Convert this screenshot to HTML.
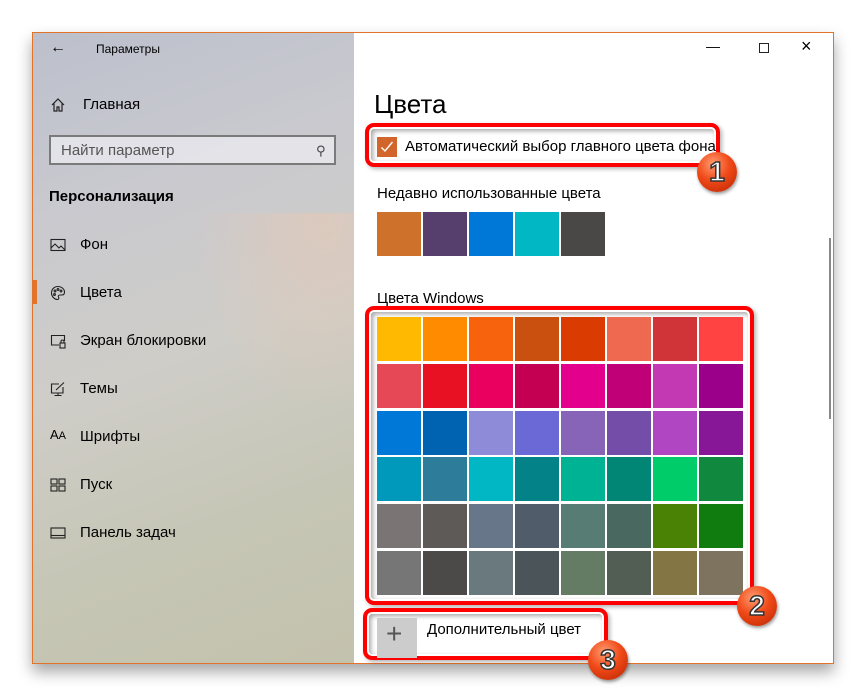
<!DOCTYPE html>
<html><head><meta charset="utf-8"><style>
*{margin:0;padding:0;box-sizing:border-box}
body{width:866px;height:697px;background:#fff;position:relative;overflow:hidden;font-family:"Liberation Sans","DejaVu Sans",sans-serif;color:#000}
.win{position:absolute;left:32px;top:32px;width:802px;height:632px;border:1px solid #e2732a;background:#fff;box-shadow:0 8px 14px rgba(0,0,0,.35)}
.left{position:absolute;left:0;top:0;width:321px;height:630px;background:linear-gradient(160deg,#bcc0cc 0%,#c9c9cf 25%,#cfcdc8 50%,#c6c6b6 75%,#c3c2ad 100%)}
.left:after{content:"";position:absolute;right:0;top:180px;width:160px;height:200px;background:radial-gradient(ellipse at 80% 0%,rgba(230,200,180,.6),rgba(230,200,180,0) 70%)}
.t{position:absolute;white-space:nowrap}
.sw{position:absolute;width:44px;height:44px}
.red{position:absolute;border:4px solid #f00;border-radius:9px;box-shadow:inset 0 0 0 2px #fff,inset 2px 2px 5px 2px rgba(0,0,0,.35),2px 2px 4px rgba(0,0,0,.3)}
.num{position:absolute;width:40px;height:40px;border-radius:50%;background:radial-gradient(circle at 40% 30%,#ff9a70 0%,#f04a18 45%,#b82200 100%);box-shadow:1px 2px 3px rgba(0,0,0,.4);color:#fff;font:bold 28px/40px "Liberation Sans",sans-serif;text-align:center;-webkit-text-stroke:1.5px #333}
.ic{position:absolute;left:17px;width:16px;height:16px}
</style></head><body>
<div class="win">
<div class="left">
  <div class="t" style="left:17px;top:6px;font-size:16px">&#8592;</div>
  <div class="t" style="left:63px;top:9px;font-size:12px">Параметры</div>
  <svg class="ic" style="top:64px" viewBox="0 0 16 16" fill="none" stroke="#222" stroke-width="1.2"><path d="M2 8L8 2l6 6M4 6.5V14h3v-4h2v4h3V6.5"/></svg>
  <div class="t" style="left:50px;top:63px;font-size:15px">Главная</div>
  <div style="position:absolute;left:16px;top:102px;width:287px;height:30px;border:2px solid #7a7a7a;background:rgba(235,235,240,.75)"></div>
  <div class="t" style="left:28px;top:109px;font-size:15px;color:#555">Найти параметр</div>
  <div class="t" style="left:283px;top:110px;font-size:13px;color:#444">&#9906;</div>
  <div class="t" style="left:16px;top:155px;font-size:15px;font-weight:bold">Персонализация</div>
  <svg class="ic" style="top:204px" viewBox="0 0 16 16" fill="none" stroke="#222" stroke-width="1.1"><rect x="1" y="2.5" width="14" height="11"/><path d="M1 11l4-4 4 4 2-2 4 4"/></svg>
  <div class="t" style="left:47px;top:203px;font-size:15px">Фон</div>
  <div style="position:absolute;left:0;top:247px;width:4px;height:24px;background:#e2732a"></div>
  <svg class="ic" style="top:252px" viewBox="0 0 16 16" fill="none" stroke="#222" stroke-width="1.1"><path d="M8 1.5C4 1.5 1.5 4.5 1.5 8c0 3.5 3 6.5 6 6.5 1.5 0 1.5-1.5 1-2.5-.5-1 0-2 1.5-2h2c2 0 2.5-1.5 2.5-3C14.5 4 11.5 1.5 8 1.5z"/><circle cx="5" cy="6" r=".9"/><circle cx="8" cy="4.5" r=".9"/><circle cx="11" cy="6" r=".9"/><circle cx="4.5" cy="9.5" r=".9"/></svg>
  <div class="t" style="left:47px;top:251px;font-size:15px">Цвета</div>
  <svg class="ic" style="top:300px" viewBox="0 0 16 16" fill="none" stroke="#222" stroke-width="1.1"><path d="M9 12H1.5V2.5h13V8"/><rect x="10" y="10" width="5" height="5"/><path d="M11 10V8.5a1.5 1.5 0 013 0V10"/></svg>
  <div class="t" style="left:47px;top:299px;font-size:15px">Экран блокировки</div>
  <svg class="ic" style="top:348px" viewBox="0 0 16 16" fill="none" stroke="#222" stroke-width="1.1"><path d="M13 6v6H1.5V3H9M8 12v2.5M4.5 14.5h7M6 9l8-7.5"/></svg>
  <div class="t" style="left:47px;top:347px;font-size:15px">Темы</div>
  <div class="t" style="left:17px;top:394px;font-size:13px">A<span style="font-size:11px">A</span></div>
  <div class="t" style="left:47px;top:395px;font-size:15px">Шрифты</div>
  <svg class="ic" style="top:444px" viewBox="0 0 16 16" fill="none" stroke="#222" stroke-width="1.1"><rect x="1" y="2" width="6" height="5"/><rect x="9" y="2" width="6" height="5"/><rect x="1" y="9" width="6" height="5"/><rect x="9" y="9" width="6" height="5"/></svg>
  <div class="t" style="left:47px;top:443px;font-size:15px">Пуск</div>
  <svg class="ic" style="top:492px" viewBox="0 0 16 16" fill="none" stroke="#222" stroke-width="1.1"><rect x="1" y="3" width="14" height="10"/><path d="M1 10.5h14"/></svg>
  <div class="t" style="left:47px;top:491px;font-size:15px">Панель задач</div>
</div>
<div class="t" style="left:673px;top:5px;font-size:14px">&#8212;</div>
<div style="position:absolute;left:726px;top:10px;width:10px;height:10px;border:1px solid #222"></div>
<div class="t" style="left:768px;top:3px;font-size:18px;font-weight:lighter">&#215;</div>
<div class="t" style="left:341px;top:56px;font-size:26px">Цвета</div>
<div style="position:absolute;left:796px;top:205px;width:2px;height:181px;background:#888"></div>
</div>

<div class="red" style="left:365px;top:123px;width:355px;height:44px"></div>
<div style="position:absolute;left:377px;top:137px;width:20px;height:20px;background:#d2652c"></div>
<svg style="position:absolute;left:380px;top:140px" width="14" height="14" viewBox="0 0 14 14"><path d="M1.5 7.5l3.5 3.5 7.5-9" fill="none" stroke="#fff" stroke-width="1.4"/></svg>
<div class="t" style="left:405px;top:138px;font-size:15px">Автоматический выбор главного цвета фона</div>
<div class="num" style="left:697px;top:152px">1</div>

<div class="t" style="left:377px;top:185px;font-size:15px">Недавно использованные цвета</div>
<div class="sw" style="left:377px;top:212px;background:#cd712b"></div>
<div class="sw" style="left:423px;top:212px;background:#573f6d"></div>
<div class="sw" style="left:469px;top:212px;background:#0078d7"></div>
<div class="sw" style="left:515px;top:212px;background:#00b7c3"></div>
<div class="sw" style="left:561px;top:212px;background:#4a4847"></div>

<div class="t" style="left:377px;top:290px;font-size:15px">Цвета Windows</div>
<div class="red" style="left:365px;top:306px;width:389px;height:299px"></div>
<div id="g"></div>
<div class="num" style="left:737px;top:586px">2</div>

<div class="red" style="left:363px;top:608px;width:245px;height:52px"></div>
<div style="position:absolute;left:377px;top:618px;width:40px;height:40px;background:#ccc"></div>
<div class="t" style="left:386px;top:618px;font-size:28px;color:#555;font-weight:lighter">+</div>
<div class="t" style="left:427px;top:621px;font-size:15px">Дополнительный цвет</div>
<div class="num" style="left:588px;top:640px">3</div>

<script>
var c=[["#FFB900","#FF8C00","#F7630C","#CA5010","#DA3B01","#EF6950","#D13438","#FF4343"],
["#E74856","#E81123","#EA005E","#C30052","#E3008C","#BF0077","#C239B3","#9A0089"],
["#0078D7","#0063B1","#8E8CD8","#6B69D6","#8764B8","#744DA9","#B146C2","#881798"],
["#0099BC","#2D7D9A","#00B7C3","#038387","#00B294","#018574","#00CC6A","#10893E"],
["#7A7574","#5D5A58","#68768A","#515C6B","#567C73","#486860","#498205","#107C10"],
["#767676","#4C4A48","#69797E","#4A5459","#647C64","#525E54","#847545","#7E735F"]];
var h="";for(var r=0;r<6;r++)for(var k=0;k<8;k++)h+='<div class="sw" style="left:'+(377+k*46)+'px;top:'+(317+r*46.8)+'px;height:44px;background:'+c[r][k]+'"></div>';
document.getElementById("g").innerHTML=h;
</script>
</body></html>
